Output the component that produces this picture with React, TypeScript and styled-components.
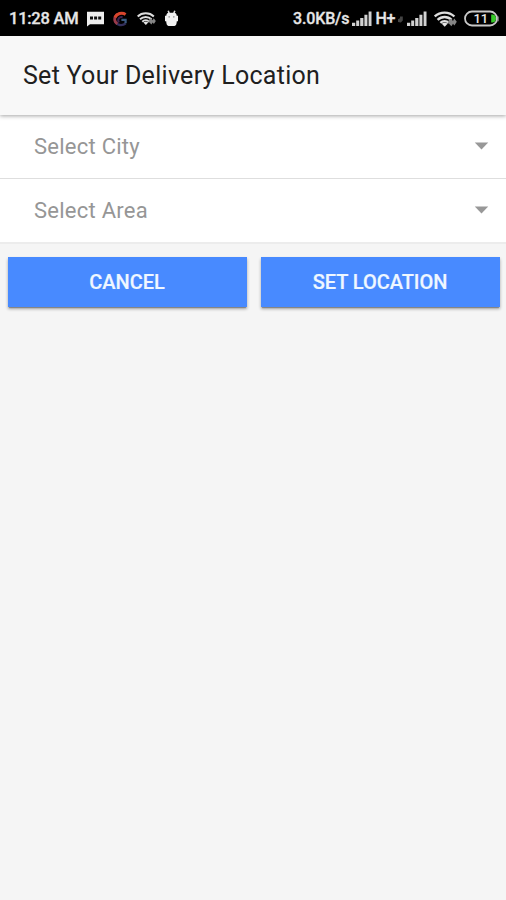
import React from "react";
import styled, { createGlobalStyle } from "styled-components";

const GlobalStyle = createGlobalStyle`
  * { box-sizing: border-box; }
  body { margin: 0; background: #f5f5f5; font-family: Roboto, "Liberation Sans", sans-serif; }
`;

const Screen = styled.main`
  min-height: 900px;
  background: #f5f5f5;
`;

const StatusBar = styled.div`
  display: flex;
  justify-content: space-between;
  height: 36px;
  padding: 0 7px 0 9px;
  background: #000;
  color: #e6e6e6;
`;

const StatusGroup = styled.div`
  display: flex;
  align-items: center;
  height: 37px;
`;

const StatusText = styled.span<{ $width: number; $size?: number; $spacing?: number }>`
  width: ${(p) => p.$width}px;
  font-size: ${(p) => p.$size ?? 16}px;
  font-weight: 500;
  line-height: 20px;
  letter-spacing: ${(p) => p.$spacing ?? 0}px;
  white-space: nowrap;
  -webkit-text-stroke: 0.3px currentColor;
`;

const StatusIcon = styled.svg<{ $gap?: number }>`
  display: block;
  flex: none;
  margin-left: ${(p) => p.$gap ?? 0}px;
`;

const Header = styled.header`
  position: relative;
  display: flex;
  align-items: center;
  height: 79px;
  padding: 0 23px;
  background: #f8f8f8;
  box-shadow: 0 1px 4px rgba(0, 0, 0, 0.36);
`;

const Title = styled.h1`
  margin: 0;
  color: #202020;
  font-size: 25px;
  font-weight: 400;
  line-height: 30px;
  letter-spacing: 0.28px;
  white-space: nowrap;
`;

const SelectList = styled.div`
  background: #fff;
  border-bottom: 2px solid #ececec;
`;

const SelectRow = styled.div<{ $height: number }>`
  display: flex;
  align-items: center;
  justify-content: space-between;
  height: ${(p) => p.$height}px;
  padding: 0 17px 0 34px;
  color: #969696;
  font-size: 22px;
  line-height: 28px;
  letter-spacing: 0.25px;

  & + & {
    border-top: 1px solid #dedede;
  }
`;

const Caret = styled.svg`
  display: block;
  margin-top: -2px;
`;

const Actions = styled.div`
  display: grid;
  grid-template-columns: 1fr 1fr;
  gap: 14px;
  padding: 12.5px 6.5px 0 7.5px;
`;

const ActionButton = styled.button`
  height: 50.5px;
  padding: 0;
  border: 0;
  background: #488aff;
  color: #eff7ff;
  font: 500 20px/24px Roboto, "Liberation Sans", sans-serif;
  letter-spacing: -0.05px;
  text-transform: uppercase;
  -webkit-text-stroke: 0.2px currentColor;
  box-shadow: 0 2px 3px rgba(0, 0, 0, 0.32), 0 2px 1px -1px rgba(0, 0, 0, 0.25);
`;

const ChatIcon = () => (
  <StatusIcon width="17" height="16" viewBox="0 0 17 16">
    <path d="M0 0.7h17v12.6H3L0 15.5z" fill="#eee" />
    <path d="M3 5.6h3v3H3zM7.1 5.6h3v3h-3zM11.2 5.6h3v3h-3z" fill="#111" />
  </StatusIcon>
);

const SwirlIcon = () => (
  <StatusIcon $gap={9} width="15" height="16" viewBox="0 0 15 16">
    <path d="M2.2 10.6c1.6 3.8 7.2 4.6 10.4 1.8" fill="none" stroke="#34305c" strokeWidth="2.4" />
    <path d="M4.4 3.4C.6 5.9.9 10.6 4.4 12.8" fill="none" stroke="#9a3a48" strokeWidth="2.8" />
    <path d="M12.6 3.4C8.8.9 3.6 2.6 2 6.4" fill="none" stroke="#d9452c" strokeWidth="3" />
    <path d="M5.8 11.5C4 8 6.6 5.2 9.6 6.2" fill="none" stroke="#3d2250" strokeWidth="2" />
    <path d="M8.4 8.8h4.2v3.4" fill="none" stroke="#3a5a80" strokeWidth="2.2" />
  </StatusIcon>
);

const WifiIcon = ({ width, gap }: { width: number; gap: number }) => (
  <StatusIcon $gap={gap} width={width} height={(width * 16) / 23} viewBox="0 0 23 16">
    <g fill="none" stroke="#dedede" strokeWidth="2.4">
      <path d="M.8 5.5c5.4-5.2 14.2-5.2 19.6 0" />
      <path d="M3.6 8.8c4-3.8 10-3.8 14 0" />
      <path d="M6.4 11.8c2.4-2.3 6-2.3 8.4 0" />
    </g>
    <path d="M7.8 12.7a4.3 4.3 0 0 1 5.8 0l-2.9 3z" fill="#e4e4e4" />
    <path d="m13.6 11.2 2-3.2h1.8l1.6 2 1.2-2.4 2.6 3.2-2.4 3.6-1.4-1.6-1.6 2.4z" fill="#858585" />
  </StatusIcon>
);

const AndroidIcon = () => (
  <StatusIcon $gap={9} width="13" height="18" viewBox="0 0 13 18">
    <path d="M3.2.8 4.4 4M9.8.8 8.6 4" stroke="#ddd" strokeWidth="1.6" />
    <path d="M1.3 5.8Q1.4 2.7 4 2.7h5q2.6 0 2.7 3.1H13v5.5h-1.2q-.2 4.6-2.3 4.6h-6q-2.1 0-2.3-4.6H0V5.8z" fill="#f1f1f1" />
    <path d="M3.5 6.2h1.4v1.4H3.5zM8.1 6.2h1.4v1.4H8.1z" fill="#8a8a8a" />
  </StatusIcon>
);

const SignalIcon = ({ gap }: { gap: number }) => (
  <StatusIcon $gap={gap} width="20" height="15" viewBox="0 0 20 15">
    <path d="M0 11.8h3.2V15H0zM4.2 9.6h3V15h-3zM8.2 7h3.2v8H8.2zM12.4 3.8h3V15h-3zM16.6.5h2.9V15h-2.9z" fill="#d2d2d2" />
  </StatusIcon>
);

const NetworkDot = () => (
  <StatusIcon $gap={3} width="5" height="8" viewBox="0 0 5 8">
    <path d="M0 7V4.2l2-1V1.4h2.8v4L2.8 7.6z" fill="#444" />
  </StatusIcon>
);

const BatteryIcon = () => (
  <StatusIcon $gap={7} width="35" height="18" viewBox="0 0 35 18">
    <rect x="1" y="1.5" width="32" height="14" rx="7" fill="#000" stroke="#c8c8c8" strokeWidth="1.8" />
    <path d="M27.2 4.5h1q3.8 0 3.8 4t-3.8 4h-1z" fill="#36c928" />
    <path d="M34 6.5v4.8" stroke="#aaa" strokeWidth="1.2" />
    <text x="16.8" y="13.3" textAnchor="middle" fill="#e8e8e8" fontFamily="Roboto, sans-serif" fontSize="13" fontWeight="500">11</text>
  </StatusIcon>
);

const SelectField = ({ label, height }: { label: string; height: number }) => (
  <SelectRow $height={height}>
    <span>{label}</span>
    <Caret width="15" height="8" viewBox="0 0 15 8">
      <path d="M.8.5h13.4L7.5 7.6z" fill="#989898" />
    </Caret>
  </SelectRow>
);

export default function App() {
  return (
    <>
      <GlobalStyle />
      <Screen>
        <StatusBar>
          <StatusGroup>
            <StatusText $width={78} $size={16.5} $spacing={-0.25}>11:28 AM</StatusText>
            <ChatIcon />
            <SwirlIcon />
            <WifiIcon width={19} gap={9} />
            <AndroidIcon />
          </StatusGroup>
          <StatusGroup>
            <StatusText $width={57} $spacing={-0.15}>3.0KB/s</StatusText>
            <SignalIcon gap={2} />
            <StatusText $width={23} $spacing={-0.4}>&nbsp;H+</StatusText>
            <NetworkDot />
            <SignalIcon gap={4} />
            <WifiIcon width={23} gap={7} />
            <BatteryIcon />
          </StatusGroup>
        </StatusBar>
        <Header>
          <Title>Set Your Delivery Location</Title>
        </Header>
        <SelectList>
          <SelectField label="Select City" height={63} />
          <SelectField label="Select Area" height={64} />
        </SelectList>
        <Actions>
          <ActionButton>Cancel</ActionButton>
          <ActionButton>Set Location</ActionButton>
        </Actions>
      </Screen>
    </>
  );
}
